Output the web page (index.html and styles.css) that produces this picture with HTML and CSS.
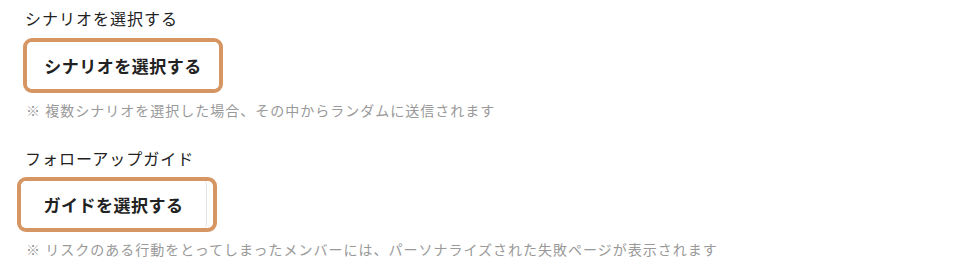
FILE: index.html
```
<!DOCTYPE html>
<html lang="ja">
<head>
  <meta charset="UTF-8">
  <title>配信設定</title>
  <link rel="stylesheet" href="styles.css">
</head>
<body>
  <div class="field">
    <div class="field-label">シナリオを選択する</div>
    <div class="picker">
      <button type="button" class="picker-btn">シナリオを選択する</button>
    </div>
    <p class="note">※ 複数シナリオを選択した場合、その中からランダムに送信されます</p>
  </div>

  <div class="field">
    <div class="field-label">フォローアップガイド</div>
    <div class="picker picker-guide">
      <button type="button" class="picker-btn">ガイドを選択する</button>
    </div>
    <p class="note">※ リスクのある行動をとってしまったメンバーには、パーソナライズされた失敗ページが表示されます</p>
  </div>
</body>
</html>
```

FILE: styles.css
```
body {
  margin: 0;
  padding: 6px 25px 0;
  background: #fff;
  color: #222;
  font-family: "Noto Sans CJK JP", "Noto Sans", sans-serif;
}

.field {
  margin-bottom: 26px;
}

.field-label {
  font-size: 16px;
  line-height: 24px;
  letter-spacing: 1px;
}

.picker {
  box-sizing: border-box;
  width: 200px;
  height: 55px;
  margin: 8px 0 0 -2px;
  border: 4px solid #d69663;
  border-radius: 9px;
  overflow: hidden;
  display: flex;
}

.picker-guide {
  margin: 7px 0 0 -8px;
}

.picker-btn {
  flex: 1;
  background: #fff;
  border: 0;
  border-radius: 4px;
  color: #222;
  font-family: inherit;
  font-size: 17px;
  font-weight: bold;
  letter-spacing: 0.5px;
  cursor: pointer;
}

.picker-guide .picker-btn {
  flex: 0 0 186px;
  border-right: 1px solid #e2e2e2;
}

.note {
  margin: 7px 0 0 1px;
  font-size: 14px;
  line-height: 20px;
  letter-spacing: 1px;
  color: #999;
}
```
